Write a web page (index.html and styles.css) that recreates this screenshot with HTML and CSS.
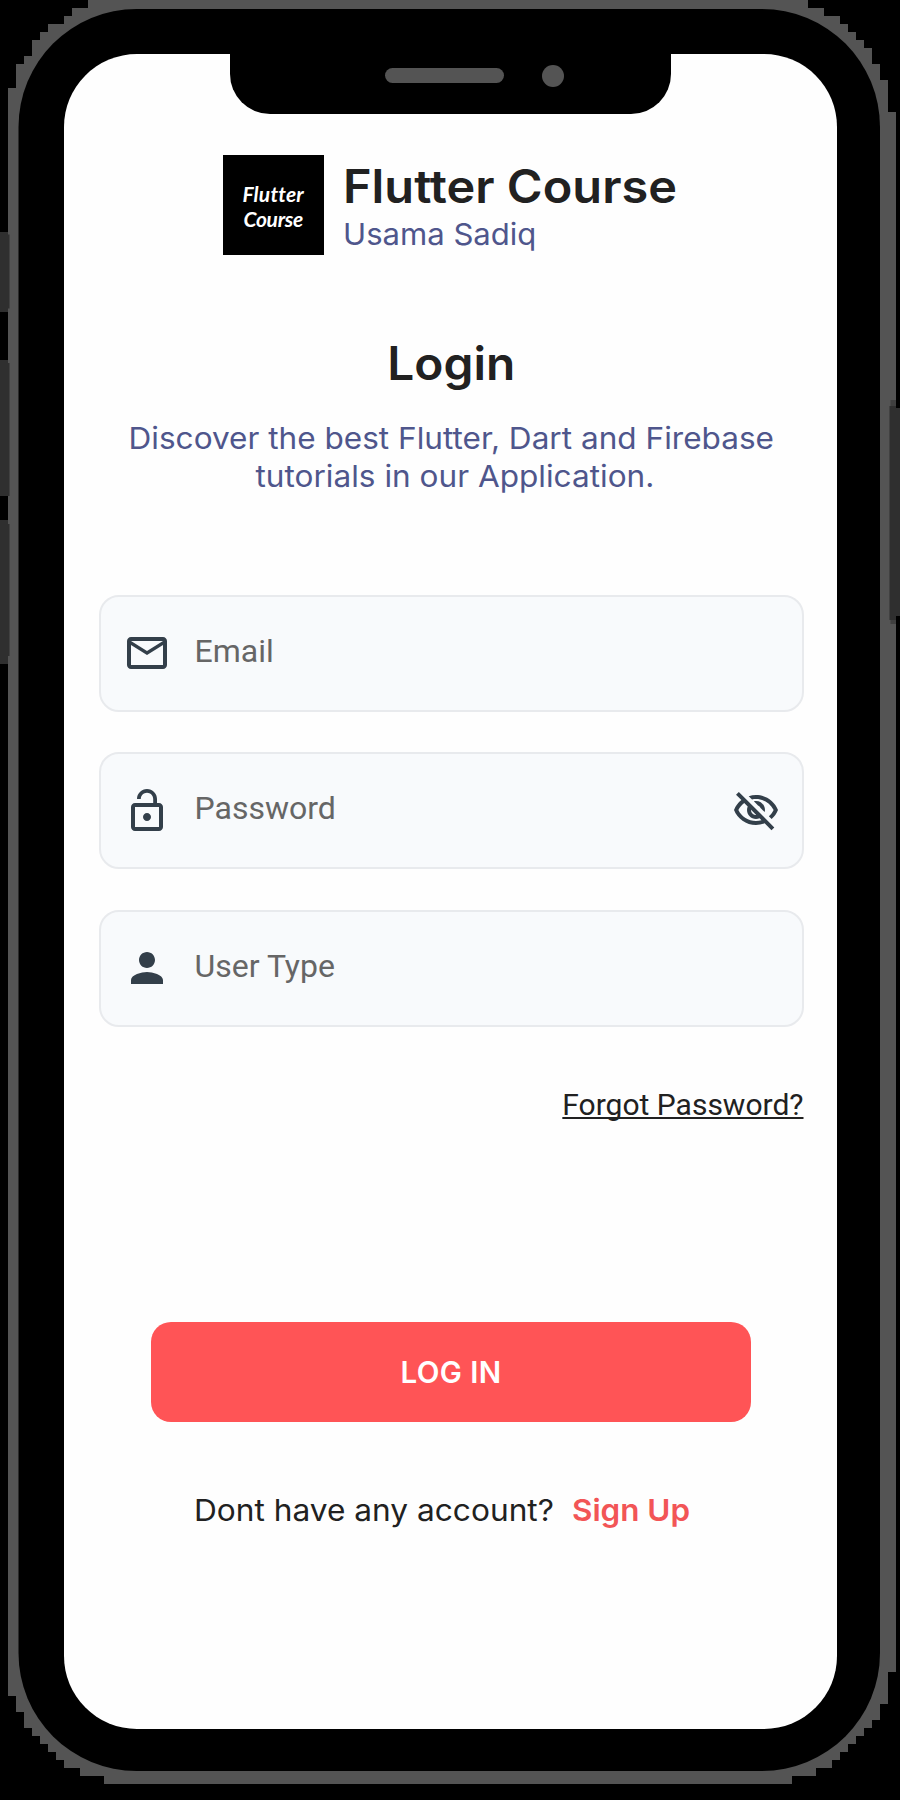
FILE: index.html
```html
<!DOCTYPE html>
<html lang="en">
<head>
<meta charset="utf-8">
<title>Flutter Course Login</title>
<link rel="stylesheet" href="styles.css">
</head>
<body>
<div class="stage">
  <svg class="shell" viewBox="0 0 900 1800" aria-hidden="true">
    <path fill="#545454" shape-rendering="crispEdges" d="M88 0H808V8H824V16H840V24H848V32H856V40H864V48H872V64H880V80H888V112H896V1672H888V1704H880V1720H872V1728H864V1736H856V1744H848V1752H840V1760H832V1768H816V1776H792V1784H104V1776H80V1768H64V1760H56V1752H48V1744H40V1736H32V1728H24V1712H16V1696H8V88H16V64H24V56H32V40H40V32H48V24H64V16H72V8H88Z"/>
    <path fill="#2f2f2f" d="M0 232H8V234.500H9.500V308.500H8V312H0ZM0 360H8V363H9.500V496H0ZM0 520H8V524H9.500V656H8V664H0ZM889.500 406H896V408H900V616H896V620H889.500Z"/>
    <path fill="#3f3f3f" d="M890.500 400H896V406H890.500ZM890.500 620H896V624H890.500Z"/>
    <rect x="18.500" y="9" width="861.500" height="1762" rx="118" fill="#000"/>
  </svg>
  <main class="screen">
    <div class="notch"><span class="speaker"></span><span class="camera"></span></div>
    <header class="brand">
      <div class="logo"><span class="logo-top">Flutter</span><span class="logo-bottom">Course</span></div>
      <div class="brand-text">
        <div class="brand-name">Flutter Course</div>
        <div class="brand-author">Usama Sadiq</div>
      </div>
    </header>
    <h1 class="title">Login</h1>
    <p class="intro">Discover the best Flutter, Dart and Firebase<br><span class="intro-second">tutorials in our Application.</span></p>
    <div class="fields">
      <div class="field">
        <svg class="icon" viewBox="0 0 24 24"><path d="M20 4H4c-1.100 0-1.990.9-1.990 2L2 18c0 1.100.9 2 2 2h16c1.100 0 2-.9 2-2V6c0-1.100-.9-2-2-2zm0 14H4V8l8 5 8-5v10zm-8-7L4 6h16l-8 5z"/></svg>
        <span class="label">Email</span>
      </div>
      <div class="field">
        <svg class="icon" viewBox="0 0 24 24"><path d="M12 17c1.100 0 2-.9 2-2s-.9-2-2-2-2 .9-2 2 .9 2 2 2zm6-9h-1V6c0-2.760-2.240-5-5-5S7 3.240 7 6h1.900c0-1.710 1.390-3.100 3.100-3.100 1.710 0 3.100 1.390 3.100 3.100v2H6c-1.100 0-2 .9-2 2v10c0 1.100.9 2 2 2h12c1.100 0 2-.9 2-2V10c0-1.100-.9-2-2-2zm0 12H6V10h12v10z"/></svg>
        <span class="label">Password</span>
        <svg class="icon" viewBox="0 0 24 24"><path d="M12 6c3.790 0 7.170 2.130 8.820 5.500-.59 1.220-1.420 2.270-2.410 3.120l1.410 1.410c1.390-1.230 2.490-2.770 3.180-4.530C21.270 7.110 17 4 12 4c-1.270 0-2.490.2-3.640.57l1.650 1.650C10.660 6.090 11.320 6 12 6zm-1.070 1.140L13 9.210c.57.25 1.030.71 1.280 1.280l2.070 2.070c.08-.34.14-.7.14-1.070C16.500 9.010 14.480 7 12 7c-.37 0-.72.05-1.070.14zM2.010 3.870l2.680 2.680C3.060 7.830 1.770 9.530 1 11.500 2.730 15.890 7 19 12 19c1.520 0 2.980-.29 4.320-.82l3.420 3.420 1.410-1.410L3.420 2.450 2.010 3.870zm7.500 7.500l2.610 2.610c-.04.01-.08.02-.12.02-1.380 0-2.500-1.120-2.500-2.500 0-.05.01-.08.01-.13zm-3.400-3.400l1.750 1.750c-.23.55-.36 1.150-.36 1.780 0 2.480 2.020 4.500 4.500 4.500.63 0 1.230-.13 1.770-.36l.98.98c-.88.24-1.800.38-2.750.38-3.790 0-7.170-2.130-8.820-5.500.7-1.430 1.720-2.610 2.930-3.530z"/></svg>
      </div>
      <div class="field">
        <svg class="icon" viewBox="0 0 24 24"><path d="M12 12c2.210 0 4-1.790 4-4s-1.790-4-4-4-4 1.790-4 4 1.790 4 4 4zm0 2c-2.670 0-8 1.340-8 4v2h16v-2c0-2.660-5.330-4-8-4z"/></svg>
        <span class="label">User Type</span>
      </div>
    </div>
    <a class="forgot">Forgot Password?</a>
    <button class="login">LOG IN</button>
    <p class="signup"><span class="question">Dont have any account?</span><a class="signup-link">Sign Up</a></p>
  </main>
</div>
</body>
</html>
```
FILE: styles.css
```css
* { box-sizing: border-box; margin: 0; padding: 0; }
body { background: #000; }
.stage {
  position: relative;
  width: 900px;
  height: 1800px;
  padding: 53.5px 63px 71px 63.5px;
  overflow: hidden;
  font-family: Inter, "Liberation Sans", sans-serif;
}
.shell { position: absolute; inset: 0; width: 900px; height: 1800px; }
.screen {
  position: relative;
  height: 1675.5px;
  border-radius: 73px;
  background: #fefefe;
  display: flex;
  flex-direction: column;
  padding: 0 33.5px 0 35.5px;
  color: #212121;
  white-space: nowrap;
}
.notch {
  flex: none;
  width: 441px;
  height: 61px;
  margin-left: 131px;
  margin-top: -1px;
  border-radius: 0 0 40px 40px;
  background: #000;
  display: flex;
  align-items: center;
  padding: 0 107px 15px 155px;
  justify-content: space-between;
}
.speaker { width: 119px; height: 15px; border-radius: 8px; background: #545454; }
.camera { width: 22px; height: 22px; border-radius: 50%; background: #545454; }
.brand { display: flex; height: 100px; margin: 41.5px 0 0 124px; gap: 19.5px; }
.logo {
  width: 100.5px;
  height: 100px;
  background: #000;
  color: #fff;
  display: flex;
  flex-direction: column;
  align-items: center;
  padding-top: 26px;
  font: italic 700 21px/25px "Lato", sans-serif;
}
.logo-top { letter-spacing: .2px; }
.logo-bottom { letter-spacing: -.3px; }
.brand-text { padding-top: 4px; }
.brand-name { font-size: 46px; font-weight: 600; line-height: 54px; transform: scaleX(1.058); transform-origin: 0 50%; }
.brand-author { font-size: 30px; line-height: 36px; margin-top: 2.5px; transform: scaleX(1.036); transform-origin: 0 50%; color: #4f568c; }
.title { margin-top: 79.5px; font-size: 46px; line-height: 56px; font-weight: 600; text-align: center; transform: scaleX(1.04); }
.intro { margin-top: 28px; font-size: 30px; line-height: 38px; text-align: center; transform: scaleX(1.052); color: #4f568c; }
.intro-second { padding-left: 7px; }
.fields { display: flex; flex-direction: column; gap: 40.5px; margin-top: 100px; }
.field {
  height: 117px;
  border: 2px solid #e8eaed;
  border-radius: 20px;
  background: #f8fafc;
  display: flex;
  align-items: center;
  padding: 0 21.5px;
}
.icon { width: 48px; height: 48px; fill: #333f4a; flex: none; }
.label { flex: 1; margin-left: 24px; font-family: Roboto, sans-serif; font-size: 32px; line-height: 38px; padding-bottom: 4.5px; color: #666; }
.forgot {
  align-self: flex-end;
  margin-top: 60px;
  font-family: Roboto, sans-serif;
  font-size: 30px;
  line-height: 36px;
  text-decoration: underline;
  text-decoration-thickness: 1.5px;
  text-underline-offset: 2px;
  text-decoration-skip-ink: none;
}
.login {
  flex: none;
  width: 600px;
  height: 100px;
  margin: 199px 0 0 52px;
  border: 0;
  border-radius: 20px;
  background: #ff5456;
  color: #fff;
  font: 600 29.5px/36px Inter, sans-serif;
  letter-spacing: .4px;
}
.signup { display: flex; margin: 70.5px 0 0 95px; font-size: 30px; line-height: 36px; gap: 37px; }
.question { transform: scaleX(1.055); transform-origin: 0 50%; }
.signup-link { color: #f25556; font-weight: 600; transform: scaleX(1.046); transform-origin: 0 50%; }
```
